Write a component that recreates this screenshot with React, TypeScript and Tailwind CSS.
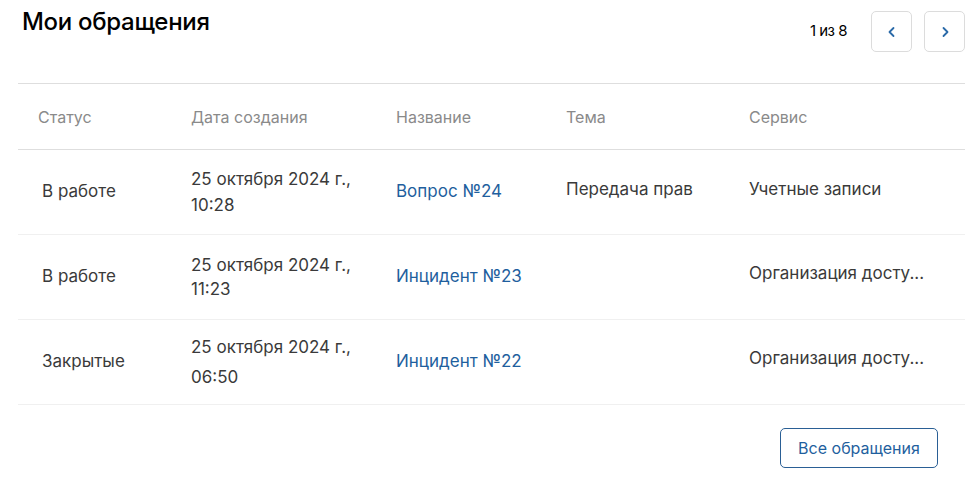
import React from "react";

const rows = [
  { status: "В работе", d1: "25 октября 2024 г.,", d2: "10:28", name: "Вопрос №24", theme: "Передача прав", service: "Учетные записи", gap: "leading-[26px]" },
  { status: "В работе", d1: "25 октября 2024 г.,", d2: "11:23", name: "Инцидент №23", theme: "", service: "Организация досту...", gap: "leading-[24px]" },
  { status: "Закрытые", d1: "25 октября 2024 г.,", d2: "06:50", name: "Инцидент №22", theme: "", service: "Организация досту...", gap: "leading-[30px]" },
];

const cols = "grid grid-cols-[173px_205px_170px_183px_1fr] items-center";

export default function App() {
  return (
    <div className="w-[974px] h-[487px] bg-white text-[#3a3a3a]" style={{ fontFamily: "Inter, 'Noto Sans', sans-serif" }}>
      <div className="flex justify-between h-[83px] pl-[22px] pr-[9px]">
        <div className="pt-[7px] text-[24px] leading-[30px] font-medium text-black tracking-[-0.3px]">Мои обращения</div>
        <div className="flex items-start gap-[12px] pt-[11px]">
          <div className="h-[40px] flex items-center text-[15px] text-black mr-[12px] tracking-[-0.5px]">1 из 8</div>
          <button className="w-[41px] h-[41px] border border-[#dcdcdc] rounded-[5px] flex items-center justify-center bg-white">
            <svg width="14" height="14" viewBox="0 0 14 14" fill="none" stroke="#2a6aa8" strokeWidth="1.8" strokeLinecap="round" strokeLinejoin="round"><path d="M8.5 3 L4.5 7 L8.5 11" /></svg>
          </button>
          <button className="w-[41px] h-[41px] border border-[#dcdcdc] rounded-[5px] flex items-center justify-center bg-white">
            <svg width="14" height="14" viewBox="0 0 14 14" fill="none" stroke="#2a6aa8" strokeWidth="1.8" strokeLinecap="round" strokeLinejoin="round"><path d="M5.5 3 L9.5 7 L5.5 11" /></svg>
          </button>
        </div>
      </div>
      <div className="ml-[18px] w-[947px]">
        <div className={`${cols} h-[67px] border-t border-b border-[#dedede] text-[16px] text-[#8a8a8a]`}>
          <div className="pl-[20px]">Статус</div>
          <div>Дата создания</div>
          <div>Название</div>
          <div>Тема</div>
          <div>Сервис</div>
        </div>
        {rows.map((r, i) => (
          <div key={i} className={`${cols} h-[85px] border-b border-[#f0f0f0] text-[17px]`}>
            <div className="pl-[24px]">{r.status}</div>
            <div className={r.gap}>
              <div>{r.d1}</div>
              <div>{r.d2}</div>
            </div>
            <div className="text-[#1f5f9e]">{r.name}</div>
            <div className={i === 0 ? "-mt-[4px]" : ""}>{r.theme}</div>
            <div className={i === 0 ? "-mt-[4px]" : "-mt-[6px]"}>{r.service}</div>
          </div>
        ))}
        <div className="flex justify-end pt-[23px] pr-[27px]">
          <button className="w-[158px] h-[40px] border border-[#2a5f95] rounded-[5px] text-[16px] text-[#1f5f9e] bg-white">Все обращения</button>
        </div>
      </div>
    </div>
  );
}
